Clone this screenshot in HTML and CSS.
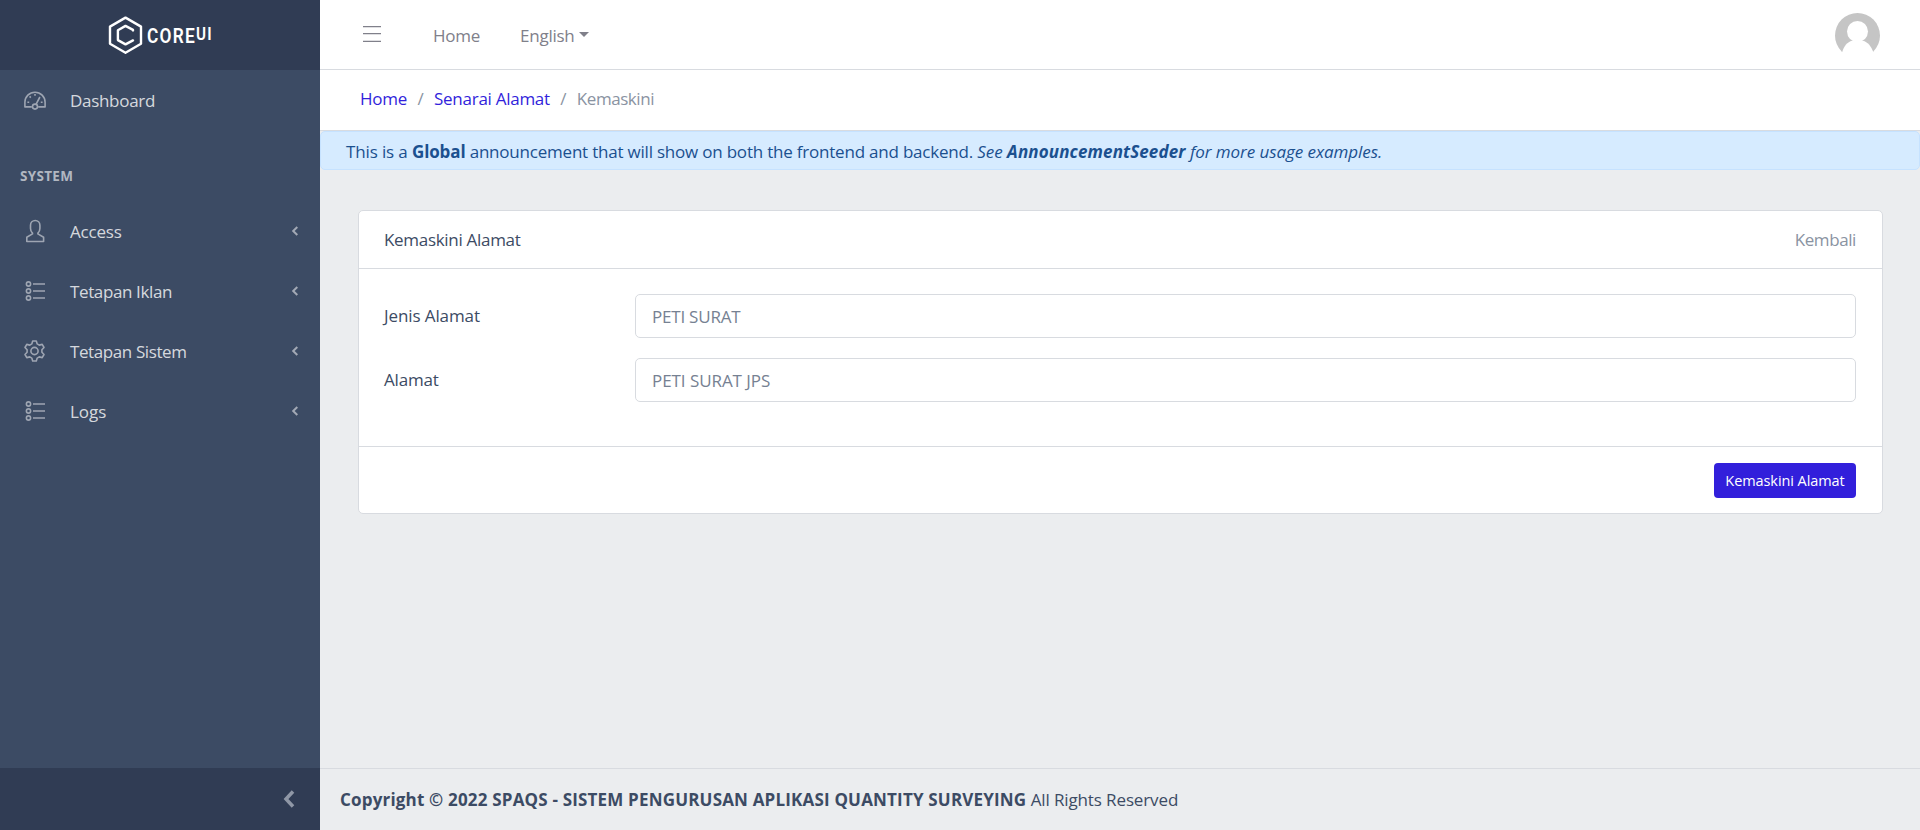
FILE: index.html
```html
<!DOCTYPE html>
<html lang="en">
<head>
<meta charset="utf-8">
<title>Kemaskini Alamat</title>
<link rel="stylesheet" href="styles.css">
</head>
<body>
<aside class="sidebar">
  <div class="brand">
    <svg class="brand-logo" width="106" height="40" viewBox="0 0 106 40">
      <g fill="none" stroke="#fff" stroke-width="2.4" stroke-linejoin="round" stroke-linecap="round">
        <path d="M17.5 2.6 L33 11.6 V28.8 L17.5 37.8 L2 28.8 V11.6 Z"/>
        <path d="M25 15.4 V14.9 L17.5 10.9 L9.9 15.2 V25.1 L17.5 29.4 L25 25.4"/>
      </g>
      <text class="brand-text" fill="#fff" x="39" y="27.5" font-size="20.5" textLength="66" lengthAdjust="spacingAndGlyphs">CORE<tspan dy="-2.5" font-size="18">UI</tspan></text>
    </svg>
  </div>
  <nav class="nav">
    <a class="nav-item"><svg class="icon" viewBox="0 0 24 24"><path d="M8.8 18.9H1.9v-4.6a10.1 10.1 0 0 1 20.2 0v4.6h-6.9M4.4 14.2h1.8M17.8 14.2h1.8M6.6 8.4l1.2 1.2M12 6v1.8M16.9 9l-3.9 7.3"/><circle cx="12" cy="18.6" r="2.5"/></svg><span class="t-dash">Dashboard</span></a>
    <div class="nav-title"><span class="t-system">SYSTEM</span></div>
    <a class="nav-item"><svg class="icon" viewBox="0 0 24 24"><path d="M3.8 22.5v-4.3l5.7-3.3v-.8c-1.2-1.1-2-2.8-2-4.6V6.2a4.7 4.7 0 0 1 9.4 0v3.3c0 1.8-.8 3.5-2 4.6v.8l5.7 3.3v4.3Z"/></svg><span class="t-access">Access</span><svg class="chev" viewBox="0 0 8 10"><path d="M6.3 1 2.2 5l4.1 4"/></svg></a>
    <a class="nav-item"><svg class="icon" viewBox="0 0 24 24"><circle cx="5.5" cy="5" r="2.1"/><circle cx="5.5" cy="12" r="2.1"/><circle cx="5.5" cy="19" r="2.1"/><path d="M10 5h12M10 12h12M10 19h12"/></svg><span class="t-iklan">Tetapan Iklan</span><svg class="chev" viewBox="0 0 8 10"><path d="M6.3 1 2.2 5l4.1 4"/></svg></a>
    <a class="nav-item"><svg class="icon" viewBox="0 0 24 24"><path d="M9.7 2h3.6l.9 2.9 2 1.2 3-.7 1.800 3.100-2.100 2.300v2.400l2.100 2.300-1.800 3.100-3-.7-2 1.200-.9 2.900H9.700l-.9-2.900-2-1.200-3 .7L2 15.500l2.100-2.300v-2.400L2 8.500l1.800-3.100 3 .7 2-1.200Z"/><circle cx="11.5" cy="12" r="3.6"/></svg><span class="t-sistem">Tetapan Sistem</span><svg class="chev" viewBox="0 0 8 10"><path d="M6.3 1 2.2 5l4.1 4"/></svg></a>
    <a class="nav-item"><svg class="icon" viewBox="0 0 24 24"><circle cx="5.5" cy="5" r="2.1"/><circle cx="5.5" cy="12" r="2.1"/><circle cx="5.5" cy="19" r="2.1"/><path d="M10 5h12M10 12h12M10 19h12"/></svg><span>Logs</span><svg class="chev" viewBox="0 0 8 10"><path d="M6.3 1 2.2 5l4.1 4"/></svg></a>
  </nav>
  <div class="minimizer"><svg width="12" height="18" viewBox="0 0 12 18"><path d="M10 1.5 3 9l7 7.5"/></svg></div>
</aside>
<div class="page">
  <header class="topbar">
    <svg class="toggler" width="18" height="16" viewBox="0 0 18 16"><path d="M0 .5h18M0 7.7h18M0 15.3h18"/></svg>
    <a class="t-home">Home</a>
    <a class="lang"><span class="t-english">English</span><i class="caret"></i></a>
    <svg class="avatar" width="45" height="45" viewBox="0 0 45 45"><defs><clipPath id="round"><circle cx="22.5" cy="22.5" r="22.5"/></clipPath></defs><g clip-path="url(#round)"><path fill="#c5c5c5" d="M0 0h45v39H0z"/><circle cx="22.5" cy="18.5" r="10.5" fill="#fff"/><path fill="#fff" d="M7 39.5C9 33 12.5 29 17 27.8h11C32.5 29 36 33 38.5 39.5V45H7Z"/></g></svg>
  </header>
  <div class="breadcrumb">
    <a class="t-home">Home</a><i class="sep">/</i><a class="t-senarai">Senarai Alamat</a><i class="sep">/</i><span class="active">Kemaskini</span>
  </div>
  <div class="alert"><span class="t-lead">This is a </span><strong class="t-lead">Global</strong><span class="t-notice"> announcement that will show on both the frontend and backend. </span><em><span>See </span><strong class="t-seeder">AnnouncementSeeder</strong><span class="t-usage"> for more usage examples.</span></em></div>
  <main class="main">
    <section class="card">
      <div class="card-header"><span class="t-title">Kemaskini Alamat</span><a class="back">Kembali</a></div>
      <div class="card-body">
        <div class="row"><label><span class="t-jenis">Jenis Alamat</span></label><div class="input"><span class="t-peti">PETI SURAT</span></div></div>
        <div class="row"><label><span class="t-alamat">Alamat</span></label><div class="input"><span class="t-jps">PETI SURAT JPS</span></div></div>
      </div>
      <div class="card-footer"><button class="btn">Kemaskini Alamat</button></div>
    </section>
  </main>
  <footer class="footer"><strong class="t-copy">Copyright © 2022 SPAQS - SISTEM PENGURUSAN APLIKASI QUANTITY SURVEYING</strong><span class="t-rights"> All Rights Reserved</span></footer>
</div>
</body>
</html>
```
FILE: styles.css
```css
* { box-sizing: border-box; }
body {
  margin: 0;
  height: 830px;
  display: flex;
  overflow: hidden;
  background: #ebedef;
  color: #3c4b64;
  font: 17px/26px "Open Sans", "Noto Sans", sans-serif;
}
span, strong, a { white-space: pre; }

/* Per-label tracking */
.t-dash { letter-spacing: -.3px; }
.t-system { letter-spacing: .3px; }
.t-access { letter-spacing: -.2px; }
.t-iklan { letter-spacing: -.38px; }
.t-sistem { letter-spacing: -.4px; }
.t-home { letter-spacing: -.25px; }
.t-english { letter-spacing: -.25px; }
.t-senarai { letter-spacing: -.27px; }
.t-lead { letter-spacing: -.13px; }
.t-notice { letter-spacing: -.21px; }
.t-seeder { letter-spacing: .13px; }
.t-usage { letter-spacing: -.06px; }
.t-title { letter-spacing: -.3px; }
.t-jenis { letter-spacing: -.1px; }
.t-peti { letter-spacing: -.22px; }
.t-alamat { letter-spacing: -.2px; }
.t-jps { letter-spacing: -.06px; }
.t-copy { letter-spacing: .183px; }
.t-rights { letter-spacing: -.12px; }

.sidebar {
  width: 320px;
  flex: none;
  display: flex;
  flex-direction: column;
  background: #3c4b64;
  color: rgba(255, 255, 255, .8);
}
.brand {
  height: 70px;
  display: flex;
  align-items: center;
  padding-left: 108px;
  background: #303c54;
}
.brand-logo { display: block; overflow: visible; }
.brand-text { font-family: Roboto, sans-serif; font-weight: 600; letter-spacing: 1.5px; }
.nav { flex: 1; }
.nav-item {
  height: 60px;
  display: flex;
  align-items: center;
  padding: 0 21px 0 23px;
}
.nav-item span { padding-top: 1px; }
.icon {
  width: 24px;
  height: 24px;
  margin-right: 23px;
  fill: none;
  stroke: #9ea5b2;
  stroke-width: 1.6;
  stroke-linejoin: round;
}
.chev {
  width: 8px;
  height: 10px;
  margin-left: auto;
  fill: none;
  stroke: #a3a9b5;
  stroke-width: 2;
}
.nav-title {
  height: 71px;
  padding: 33px 20px 0;
  font-size: 13.5px;
  font-weight: 700;
  color: #b1b7c1;
}
.minimizer {
  height: 62px;
  display: flex;
  align-items: center;
  justify-content: flex-end;
  padding: 0 25px 0 0;
  background: #303c54;
}
.minimizer path { fill: none; stroke: #8f97a6; stroke-width: 3.5; }
.page { flex: 1; display: flex; flex-direction: column; min-width: 0; }
.topbar {
  height: 70px;
  display: flex;
  align-items: center;
  padding: 1px 40px 0 43px;
  background: #fff;
  border-bottom: 1px solid #d8dbe0;
  color: #80808a;
}
.topbar a { padding-top: 1px; }
.toggler { stroke: #80808a; stroke-width: 1.3; margin: 0 52px 3px 0; }
.lang { display: flex; align-items: center; margin-left: 40px; }
.caret {
  margin: 0 0 2px 4px;
  border: 5px solid transparent;
  border-top-color: #80808a;
  border-bottom: 0;
}
.avatar { margin-left: auto; }
.breadcrumb {
  height: 61px;
  display: flex;
  align-items: center;
  padding: 0 0 2px 40px;
  background: #fff;
  border-bottom: 1px solid #d8dbe0;
  color: #321fdb;
}
.sep { width: 27px; text-align: center; font-style: normal; color: #8a93a2; }
.active { color: #8a93a2; letter-spacing: -.45px; }
.alert {
  height: 39px;
  padding: 7px 25px 0;
  background: #d6ebff;
  border: 1px solid #c6e2ff;
  border-radius: 5px;
  color: #1b508f;
  white-space: nowrap;
}
.main { flex: 1; padding: 40px 37px 0 38px; }
.card {
  height: 304px;
  background: #fff;
  border: 1px solid #d8dbe0;
  border-radius: 5px;
}
.card-header {
  height: 58px;
  display: flex;
  align-items: center;
  justify-content: space-between;
  padding: 0 26px 0 25px;
  border-bottom: 1px solid #d8dbe0;
}
.back { color: #8a93a2; letter-spacing: -.4px; }
.card-body { height: 177px; padding: 25px 26px 0 25px; display: flex; flex-direction: column; gap: 20px; }
.row { display: flex; }
.row label { width: 251px; padding-top: 9px; }
.input {
  flex: 1;
  height: 44px;
  padding: 9px 16px 0;
  border: 1px solid #d8dbe0;
  border-radius: 5px;
  color: #768192;
}
.card-footer {
  height: 67px;
  display: flex;
  justify-content: flex-end;
  padding: 16px 26px 0 25px;
  border-top: 1px solid #d8dbe0;
}
.btn {
  width: 142px;
  height: 35px;
  padding: 1px 0 0;
  border: 0;
  border-radius: 4px;
  background: #321fdb;
  color: #fff;
  font: 14.5px/24px "Open Sans", sans-serif;
  letter-spacing: -.08px;
}
.footer {
  height: 62px;
  padding: 18px 20px 0;
  border-top: 1px solid #d8dbe0;
}
```
